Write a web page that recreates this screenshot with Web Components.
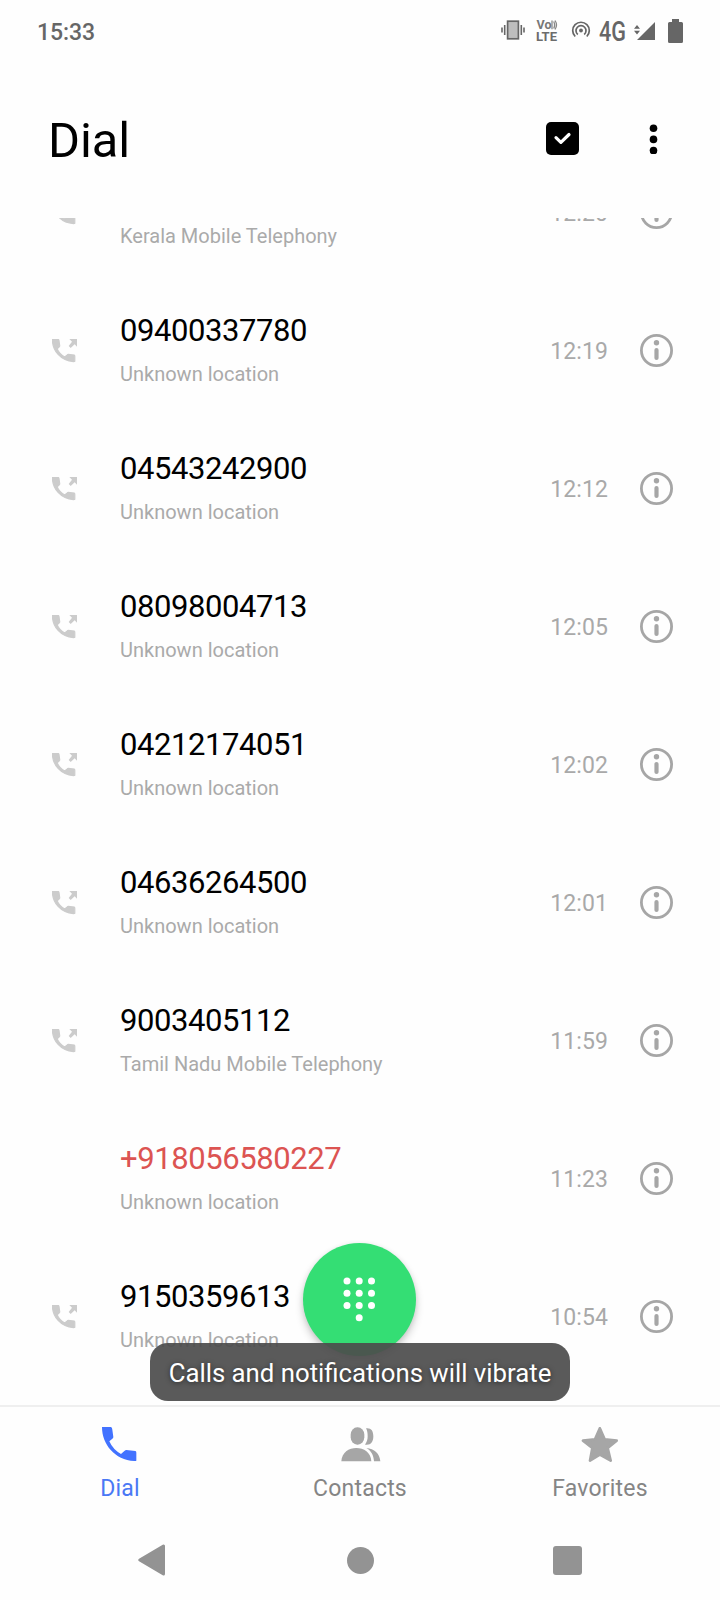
<!DOCTYPE html>
<html lang="en">
<head>
<meta charset="utf-8">
<title>Dial</title>
<style>
html,body{margin:0;padding:0;background:#fefefe}
body{width:720px;height:1600px;overflow:hidden;font-family:Roboto,"Liberation Sans",sans-serif}
</style>
</head>
<body>
<dialer-app></dialer-app>
<script>
const define = (name, html) => customElements.define(name, class extends HTMLElement {
  constructor() {
    super();
    const t = document.createElement('template');
    t.innerHTML = '<style>svg{display:block}</style>' + html;
    this.attachShadow({mode: 'open'}).append(t.content.cloneNode(true));
  }
});

const HANDSET = 'M0 0H27Q31 2 31 8L34 30Q34 33 31 35L22 43Q33 68 57 81L68 71Q70 69 73 69L100 72Q103 73 103 77V101Q102 102 97 102C38 99 0 52 0 0Z';

define('status-bar', `
<style>
:host{display:flex;height:62px;box-sizing:border-box;padding:17px 0 0 37px;color:#666}
.time{font-size:23px;line-height:32px;font-weight:500;width:464px;letter-spacing:-.1px}
.icons{display:flex;align-items:flex-start}
.lte{margin:2px 0 0 11px;width:22px;height:24px}
.hot{margin:2px 0 0 13px}
.net{margin-left:8px;width:29px;height:32px;font-size:27px;line-height:30px;font-weight:500}
.net span{display:block;width:40px;transform:scaleX(.8);transform-origin:0 0}
.sig{margin:4px 0 0 6px}
.bat{margin:2px 0 0 12px}
</style>
<div class="time">15:33</div>
<div class="icons">
<svg width="24" height="22" viewBox="0 0 24 22" style="margin-top:3px" fill="none" stroke="#666"><rect x="6.600" y="1.200" width="10.800" height="17.600" fill="#bdbdbd" stroke-width="1.700"/><path d="M3.700 5v10M20.300 5v10M1 7.500v5M23 7.500v5" stroke-width="1.600"/></svg>
<svg class="lte" width="22" height="24" viewBox="0 0 22 24" font-family="Roboto" font-weight="700" fill="#777"><text x="0.500" y="10.300" font-size="12.500" textLength="15" lengthAdjust="spacingAndGlyphs">Vo</text><path d="M16 1.500v8.800M17.700 2.500q1.800 3.500 0 7M19 1.500q3 4.500 0 9" fill="none" stroke="#888" stroke-width="1.300"/><text x="0" y="22" font-size="13.500" textLength="21" lengthAdjust="spacingAndGlyphs" fill="#6c6c6c">LTE</text></svg>
<svg class="hot" width="20" height="22" viewBox="0 0 20 22" fill="none" stroke="#666" stroke-width="1.700"><circle cx="10" cy="11.500" r="1.900" fill="#666" stroke="none"/><path d="M6.800 15.500a5 5 0 1 1 6.400 0M4.200 17.500a8.300 8.300 0 1 1 11.600 0"/></svg>
<div class="net"><span>4G</span></div>
<svg class="sig" width="22" height="20" viewBox="0 0 22 20" fill="#666"><path d="M21 1V19H3Z"/><path d="M0 7.800L3 4L6 7.800ZM0 9.700L3 13.500L6 9.700Z"/></svg>
<svg class="bat" width="15" height="24" viewBox="0 0 15 24" fill="#666"><path d="M4 0H11V3H13.500Q15 3 15 4.500V22.500Q15 24 13.500 24H1.500Q0 24 0 22.500V4.500Q0 3 1.500 3H4Z"/></svg>
</div>`);

define('app-header', `
<style>
:host{display:flex;height:156px;box-sizing:border-box;padding-left:48px}
h1{margin:0;padding-top:51px;font-size:48.800px;line-height:56px;font-weight:400;color:#000;width:498px;height:56px;letter-spacing:-.1px}
.more{margin:60px 0 0 70px}
.check{margin-top:60px}
</style>
<h1><slot></slot></h1>
<svg class="check" width="33" height="33" viewBox="0 0 33 33"><rect width="33" height="33" rx="5"/><path d="M10 15.700L14.900 20.400L23 12.500" fill="none" stroke="#fff" stroke-width="3.200" stroke-linecap="round" stroke-linejoin="round"/></svg>
<svg class="more" width="9" height="32" viewBox="0 0 9 32"><circle cx="4.500" cy="6.200" r="3.800"/><circle cx="4.500" cy="17.400" r="3.800"/><circle cx="4.500" cy="28.600" r="3.800"/></svg>`);

define('call-row', `
<style>
:host{display:flex;height:138px;flex:none;padding-left:52px}
.out{width:25px;margin-top:58px;visibility:var(--out,visible)}
.info{margin-left:43px;width:400px;padding-top:30px}
.num{font-size:31px;line-height:39px;height:40px;color:var(--num,#000);letter-spacing:-.42px}
.loc{margin-top:8px;font-size:20px;line-height:30px;color:#aaa}
.time{width:88px;text-align:right;font-size:23px;line-height:30px;margin-top:56px;color:#a9a9a9;letter-spacing:.1px}
.i{margin:53px 0 0 32px}
</style>
<svg class="out" width="25" height="24" viewBox="0 0 75 72" fill="#ccc"><g transform="translate(1 1) scale(.655)" stroke="#ccc" stroke-width="5"><path d="${HANDSET}"/></g><path d="M52 0H75V23L68 16L56 27L50 21L60 8Z"/></svg>
<div class="info"><div class="num"><slot></slot></div><div class="loc"><slot name="loc"></slot></div></div>
<div class="time"><slot name="time"></slot></div>
<svg class="i" width="33" height="33" viewBox="0 0 33 33" fill="none" stroke="#a6a6a6"><circle cx="16.500" cy="16.500" r="15.100" stroke-width="2.800"/><path d="M16.500 16V24" stroke-width="4.200" stroke-linecap="round"/><circle cx="16.500" cy="8.800" r="2.700" fill="#a6a6a6" stroke="none"/></svg>`);

define('call-list', `
<style>
:host{display:flex;flex-direction:column;height:1187px;overflow:hidden}
::slotted(:first-child){margin-top:-75px}
</style><slot></slot>`);

define('dial-button', `
<style>
:host{display:flex;align-items:flex-start;justify-content:center;width:113px;height:113px;border-radius:50%;background:#34de74;box-shadow:0 5px 9px rgba(0,0,0,.2),0 1px 5px rgba(0,0,0,.08)}
svg{margin-top:34px}
</style>
<svg width="33" height="46" viewBox="0 0 33 46" fill="#fff">
${[[4,4],[16.200,4],[28.500,4],[4,16.300],[16.200,16.300],[28.500,16.300],[4,28.500],[16.200,28.500],[28.500,28.500],[16.200,40.800]].map(([x,y])=>`<circle cx="${x}" cy="${y}" r="3.500"/>`).join('')}</svg>`);

define('toast-message', `
<style>
:host{display:block;width:420px;height:58px;border-radius:18px;background:rgba(76,76,76,.92);color:#fff;text-align:center;font-size:25.750px;line-height:60px;white-space:nowrap;text-shadow:0 1px 5px rgba(0,0,0,.55)}
</style><slot></slot>`);

define('tab-item', `
<style>
:host{display:flex;flex-direction:column;align-items:center;flex:1;color:#858585;font-size:23px;line-height:30px;letter-spacing:.2px}
.icon{height:67px;display:flex;align-items:flex-start}
</style>
<div class="icon"><slot name="icon"></slot></div><div><slot></slot></div>`);

define('tab-bar', `
<style>
:host{display:flex;height:113px;box-sizing:border-box;border-top:2px solid #efefef}
svg{margin-top:20px}
.active{color:#4a78f5}
.active svg{margin-right:1px}
.people{margin-left:1px}
</style>
<tab-item class="active"><svg slot="icon" width="35" height="35" viewBox="0 0 105 105" fill="#4272ff"><path d="${HANDSET}"/></svg>Dial</tab-item>
<tab-item><svg class="people" slot="icon" width="40" height="35" viewBox="842 97 120 105" fill="#a6a6a6"><rect x="871" y="98" width="41" height="52" rx="20" ry="22"/><path d="M843 200C845 147 931 147 933 200Z"/><path d="M917 101C932 99 939 108 939 125C939 143 930 153 914 150C920 141 922 134 922 125C922 115 921 108 917 101Z"/><path d="M918 160C942 162 958 176 960 200H941C940 181 932 168 918 160Z"/></svg>Contacts</tab-item>
<tab-item><svg slot="icon" width="38" height="36" viewBox="182 94 114 108" fill="#a6a6a6" stroke="#a6a6a6" stroke-width="8" stroke-linejoin="round"><path d="M238.500 98L253 131L289 135L262 157L271 195L238.500 177L209 195L216 157L188 135L224 131Z"/></svg>Favorites</tab-item>`);

define('nav-bar', `
<style>
:host{display:flex;align-items:center;height:82px;box-sizing:border-box;padding:2px 0 0 138px}
.home{margin-left:182px}.recent{margin-left:179px}
</style>
<svg width="27" height="32" viewBox="0 0 27 32" fill="#939393" stroke="#939393" stroke-width="3" stroke-linejoin="round"><path d="M1.800 16L25.500 2V30Z"/></svg>
<svg class="home" width="27" height="27" viewBox="0 0 27 27" fill="#939393"><circle cx="13.500" cy="13.500" r="13.500"/></svg>
<svg class="recent" width="29" height="29" viewBox="0 0 29 29" fill="#939393"><rect width="29" height="29" rx="3"/></svg>`);

const calls = [
  ['', 'Kerala Mobile Telephony', '12:20'],
  ['09400337780', 'Unknown location', '12:19'],
  ['04543242900', 'Unknown location', '12:12'],
  ['08098004713', 'Unknown location', '12:05'],
  ['04212174051', 'Unknown location', '12:02'],
  ['04636264500', 'Unknown location', '12:01'],
  ['9003405112', 'Tamil Nadu Mobile Telephony', '11:59'],
  ['+918056580227', 'Unknown location', '11:23', 'missed'],
  ['9150359613', 'Unknown location', '10:54']
];
define('dialer-app', `
<style>
:host{display:flex;flex-direction:column;width:720px;height:1600px;position:relative;background:#fefefe}
.missed{--num:#dc5452;--out:hidden}
dial-button{position:absolute;left:303px;top:1243px}
toast-message{position:absolute;left:150px;top:1343px}
</style>
<status-bar></status-bar>
<app-header>Dial</app-header>
<call-list>${calls.map(([n, l, t, c = '']) => `<call-row class="${c}">${n}<span slot="loc">${l}</span><span slot="time">${t}</span></call-row>`).join('')}</call-list>
<tab-bar></tab-bar>
<nav-bar></nav-bar>
<dial-button></dial-button>
<toast-message>Calls and notifications will vibrate</toast-message>`);
</script>
</body>
</html>
